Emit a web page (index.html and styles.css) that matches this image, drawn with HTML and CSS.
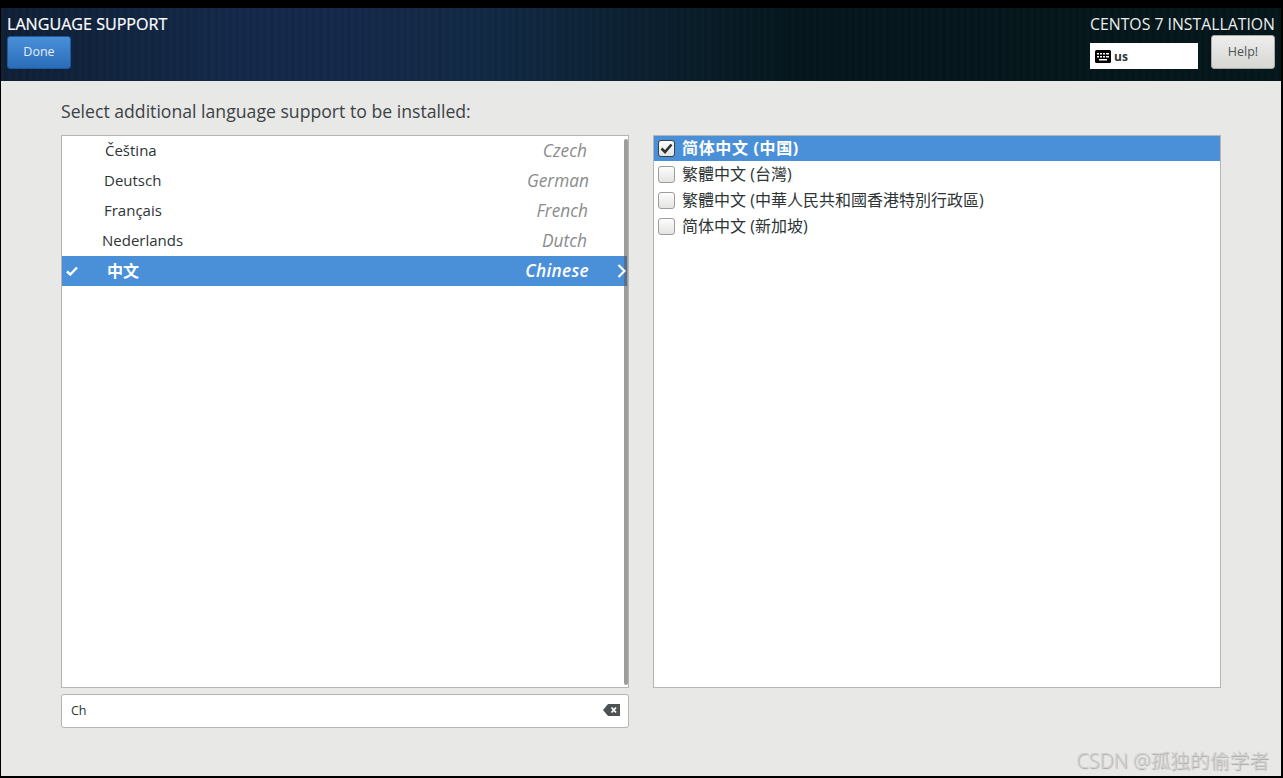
FILE: index.html
```html
<!DOCTYPE html>
<html>

<head>
	<meta charset="utf-8">
	<title>Language Support</title>
	<link rel="stylesheet" href="styles.css">
</head>

<body>
	<div id="screen">
		<div id="topbar">
			<div class="top_left">
				<div class="spoke_title">LANGUAGE SUPPORT</div>
				<button id="done_btn">Done</button>
			</div>
			<div class="top_right">
				<div class="product_title">CENTOS 7 INSTALLATION</div>
				<div class="top_controls">
					<div class="layout_box">
						<svg class="kbd_icon" width="16" height="13" viewBox="0 0 16 13">
							<rect x="0" y="0" width="16" height="13" rx="1.5" fill="#000"/>
							<path d="M2 3h2v1.500H2zM5 3h2v1.500H5zM8 3h2v1.500H8zM11 3h3v1.500h-3zM2 6h2v1.500H2zM5 6h2v1.500H5zM8 6h2v1.500H8zM11 6h3v1.500h-3zM4 9h8v1.500H4z" fill="#fff"/>
						</svg>
						<span>us</span>
					</div>
					<button id="help_btn">Help!</button>
				</div>
			</div>
		</div>

		<div id="content">
			<div class="prompt">Select additional language support to be installed:</div>
			<div class="panes">
				<div class="pane lang_pane">
					<div class="lang_row"><span class="native cs">Čeština</span><span class="english en_a">Czech</span></div>
					<div class="lang_row"><span class="native de">Deutsch</span><span class="english en_c">German</span></div>
					<div class="lang_row"><span class="native fr">Français</span><span class="english en_b">French</span></div>
					<div class="lang_row"><span class="native nl">Nederlands</span><span class="english en_a">Dutch</span></div>
					<div class="lang_row selected">
						<svg class="row_check" width="12" height="10" viewBox="0 0 12 10"><path d="M1 5.500L4.300 8.500L11 1.500" fill="none" stroke="#fff" stroke-width="2.400"/></svg>
						<span class="native zh">中文</span><span class="english en_c">Chinese</span>
						<svg class="row_arrow" width="9" height="14" viewBox="0 0 9 14"><path d="M1.500 1L7.500 7L1.500 13" fill="none" stroke="#fff" stroke-width="2.200"/></svg>
					</div>
					<div class="scroll_thumb"></div>
				</div>
				<div class="pane locale_pane">
					<div class="locale_row selected">
						<span class="check on">
							<svg width="13" height="11" viewBox="0 0 13 11"><path d="M1.500 5.500L5 9L11.500 1.500" fill="none" stroke="#2e3436" stroke-width="2.600"/></svg>
						</span>
						<span class="locale_name">简体中文 (中国)</span>
					</div>
					<div class="locale_row"><span class="check"></span><span class="locale_name">繁體中文 (台灣)</span></div>
					<div class="locale_row"><span class="check"></span><span class="locale_name">繁體中文 (中華人民共和國香港特別行政區)</span></div>
					<div class="locale_row"><span class="check"></span><span class="locale_name">简体中文 (新加坡)</span></div>
				</div>
				<div class="search_box">
					<span>Ch</span>
					<svg width="17" height="12" viewBox="0 0 17 12"><path d="M5 0H17V12H5L0 6Z" fill="#4d5355"/><path d="M8.500 3.500L13 8.500M13 3.500L8.500 8.500" stroke="#fff" stroke-width="1.800"/></svg>
				</div>
			</div>
		</div>
		<div class="watermark">CSDN @孤独的偷学者</div>
	</div>
</body>
</html>
```

FILE: styles.css
```css
* {
	margin: 0;
	padding: 0;
	box-sizing: border-box;
	font-family: "Open Sans", "Noto Sans CJK SC", sans-serif;
}

html, body {
	width: 1283px;
	height: 778px;
	overflow: hidden;
	background: #000;
}

#screen {
	position: relative;
	height: 778px;
	padding: 8px 2px 2px 1px;
	display: flex;
	flex-direction: column;
}

#topbar {
	height: 73px;
	display: flex;
	justify-content: space-between;
	padding: 0 6px;
	color: #fff;
	background:
		repeating-linear-gradient(90deg, rgba(255,255,255,0.008) 0, rgba(255,255,255,0.008) 3px, rgba(0,0,0,0.03) 3px, rgba(0,0,0,0.03) 7px),
		linear-gradient(90deg, #0f2036 0%, #14294a 18%, #15294b 26%, #112944 39%, #0b2030 50%, #05171d 62%, #04171a 100%);
}

.spoke_title {
	margin-top: 6px;
	font-size: 16.100px;
	line-height: 20px;
	font-weight: 400;
	-webkit-text-stroke: 0.2px #fff;
	white-space: nowrap;
}

#done_btn {
	display: block;
	margin-top: 2px;
	width: 64px;
	height: 33px;
	padding-bottom: 2px;
	color: #e6eef8;
	font-size: 12.500px;
	background: linear-gradient(#4a90d9, #2a6cb8);
	border: 1px solid #1d5a9e;
	border-radius: 3px;
}

.top_right {
	width: 186px;
	display: flex;
	flex-direction: column;
	align-items: flex-end;
}

.product_title {
	margin-top: 6px;
	font-size: 15.800px;
	line-height: 20px;
	color: #eceeee;
	white-space: nowrap;
}

.top_controls {
	width: 185px;
	margin-top: 1px;
	display: flex;
	justify-content: space-between;
	align-items: flex-end;
}

.layout_box {
	width: 108px;
	height: 26px;
	padding-left: 5px;
	display: flex;
	align-items: center;
	gap: 3px;
	background: #fff;
	color: #2e3436;
	font-size: 12px;
	font-weight: 700;
}

#help_btn {
	width: 64px;
	height: 34px;
	padding-bottom: 2px;
	color: #4d5355;
	font-size: 12.500px;
	background: linear-gradient(#eeeeec, #d6d6d3);
	border: 1px solid #a9a9a6;
	border-radius: 3px;
}

#content {
	flex: 1;
	padding: 0 60px;
	background: #e8e8e7;
}

.prompt {
	margin-top: 19px;
	font-size: 17.650px;
	line-height: 22px;
	color: #3c4245;
	white-space: nowrap;
}

.panes {
	margin-top: 13px;
	display: grid;
	grid-template-columns: 568px 568px;
	grid-template-rows: 553px 34px;
	column-gap: 24px;
	row-gap: 6px;
}

.pane {
	position: relative;
	background: #fff;
	border: 1px solid #b5b5b3;
}

.lang_row {
	position: relative;
	height: 30px;
	padding-bottom: 2px;
	display: flex;
	justify-content: space-between;
	align-items: center;
	width: 565px;
	font-size: 15px;
	color: #2e3436;
}

.lang_row.selected {
	background: #4a90d9;
	color: #fff;
}

.native { margin-left: 42px; }
.native.cs { margin-left: 43px; }
.native.nl { margin-left: 40px; }
.native.zh { margin-left: 45px; font-size: 16px; font-weight: 700; }

.english {
	font-size: 17.300px;
	font-style: italic;
	color: #8a8c8c;
}

.en_a { margin-right: 40px; }
.en_b { margin-right: 39px; }
.en_c { margin-right: 38px; }

.selected .english {
	color: #fff;
	font-weight: 600;
	letter-spacing: 0.3px;
}

.row_check {
	position: absolute;
	left: 4px;
	top: 10px;
}

.row_arrow {
	position: absolute;
	right: 1px;
	top: 8px;
	z-index: 1;
}

.scroll_thumb {
	position: absolute;
	top: 3px;
	right: 0;
	width: 4px;
	height: 546px;
	background: rgba(90, 92, 92, 0.6);
	border-radius: 2px;
}

.locale_row {
	height: 26px;
	padding-left: 4px;
	display: flex;
	align-items: center;
	gap: 7px;
	font-size: 16px;
	color: #2e3436;
}

.locale_name {
	padding-bottom: 3px;
	white-space: nowrap;
}

.locale_row.selected {
	height: 25px;
	background: #4a90d9;
	color: #fff;
	font-weight: 700;
}

.selected .locale_name {
	letter-spacing: 0.65px;
}

.check {
	width: 17px;
	height: 17px;
	display: flex;
	align-items: center;
	justify-content: center;
	background: linear-gradient(#fdfdfd, #e4e4e2);
	border: 1px solid #9b9d9d;
	border-radius: 3px;
}

.check.on {
	border-color: #3b4043;
}

.search_box {
	display: flex;
	justify-content: space-between;
	align-items: center;
	padding: 0 8px 2px 9px;
	background: #fff;
	border: 1px solid #b5b5b3;
	border-radius: 3px;
	font-size: 12.500px;
	color: #2e3436;
}

.watermark {
	position: absolute;
	right: 14px;
	bottom: 4px;
	font-size: 19.800px;
	line-height: 26px;
	font-weight: 300;
	color: #cfcfce;
	text-shadow: 1px 1px 1px #a5a5a5;
	white-space: nowrap;
}
```
